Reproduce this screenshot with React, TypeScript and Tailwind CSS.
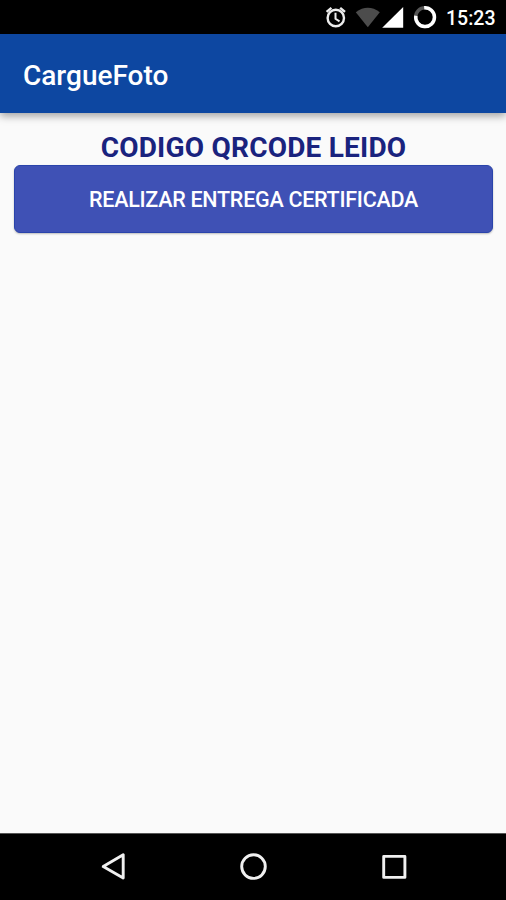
function StatusBar() {
	return (
		<div className="flex h-[34px] shrink-0 items-center bg-black pl-[325px] text-white">
			<svg className="h-[34px] w-[116px]" viewBox="325 0 116 34" fill="none">
				{/* alarm */}
				<g stroke="#ececec" strokeWidth="2.4">
					<circle cx="335.8" cy="18" r="8.2" />
					<path d="M335.5 12.8v6l4 2.6" strokeWidth="2" />
					<path d="M326.6 11.8l4.8-4M345 11.8l-4.8-4" />
				</g>
				{/* wifi */}
				<path d="M355.8 12.2Q367.8 3.4 379.8 12.2L367.8 27.2z" fill="#4c4c4c" />
				{/* signal */}
				<path d="M403.2 7v20.8h-21z" fill="#fff" />
				{/* battery */}
				<circle cx="425" cy="17.2" r="9.4" stroke="#555" strokeWidth="3.4" />
				<path
					d="M424.2 7.8a9.4 9.4 0 1 1-8.4 8"
					stroke="#fff"
					strokeWidth="3.4"
				/>
			</svg>
			<p className="ml-[5px] mt-[3px] text-[19.5px] leading-none font-medium">
				15:23
			</p>
		</div>
	);
}

function NavBar() {
	return (
		<div className="flex h-[67px] shrink-0 items-center justify-center border-t border-[#555] bg-black">
			<svg
				className="h-[66px] w-[506px]"
				viewBox="0 834 506 66"
				fill="none"
				stroke="#f0f0f0"
				strokeWidth="2.9"
				strokeLinejoin="round"
			>
				<path d="M123.2 854.8v23.2l-20-11.4z" />
				<circle cx="253.5" cy="866.6" r="11.8" />
				<rect x="383.7" y="856.4" width="21.2" height="21" />
			</svg>
		</div>
	);
}

export default function App() {
	return (
		<div className="flex h-[900px] w-[506px] flex-col overflow-hidden bg-[#fafafa] font-[Roboto,sans-serif]">
			<StatusBar />
			<header className="z-10 flex h-[79px] shrink-0 items-center bg-[#0d47a1] pl-[23px] pt-1 shadow-[0_3px_8px_rgba(0,0,0,0.36)]">
				<h1 className="text-[28px] leading-none font-medium text-white">
					CargueFoto
				</h1>
			</header>
			<main className="flex flex-1 flex-col pt-[17px] pr-[13px] pl-[14px]">
				<h2 className="h-[35px] text-center text-[28px] leading-[35px] font-bold tracking-[0.21px] whitespace-nowrap text-[#1a237e]">
					CODIGO QRCODE LEIDO
				</h2>
				<button className="h-[68px] rounded-[6px] border border-[#2a44ab] bg-[#3f51b5] pt-[2px] text-[21.5px] font-medium tracking-[-0.27px] whitespace-nowrap text-white shadow-[0_1px_2px_rgba(0,0,0,0.25)]">
					REALIZAR ENTREGA CERTIFICADA
				</button>
			</main>
			<NavBar />
		</div>
	);
}
